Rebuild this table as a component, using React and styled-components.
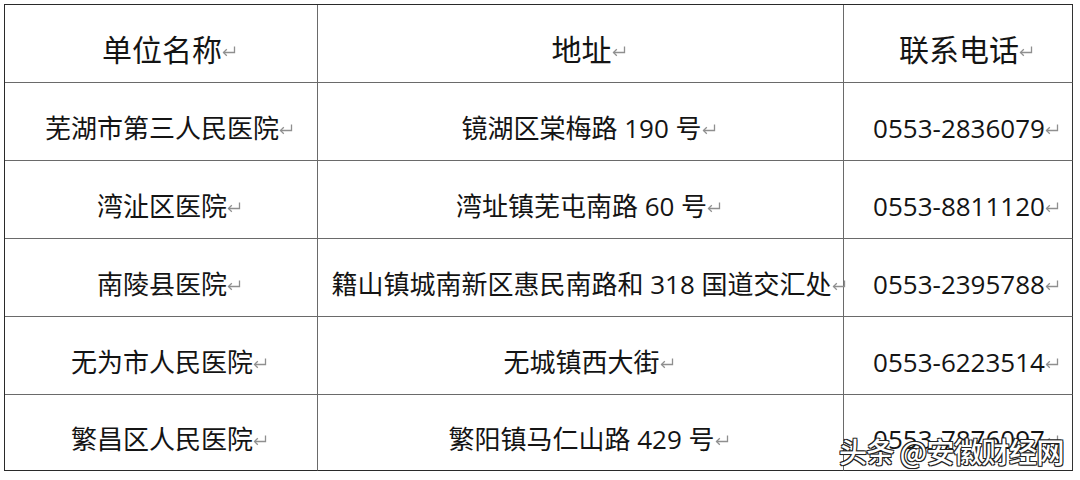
import styled, { createGlobalStyle } from "styled-components";

const GlobalStyle = createGlobalStyle`
  html, body {
    margin: 0;
    padding: 0;
    background: #ffffff;
  }
  body {
    font-family: "Open Sans", "Noto Sans CJK SC", sans-serif;
    color: #111;
  }
`;

const Wrap = styled.div`
  position: relative;
  width: 1069px;
  margin: 4px 0 0 4px;
`;

const Grid = styled.div`
  display: grid;
  grid-template-columns: 313px 526px 229px;
  grid-template-rows: repeat(5, 78px) 76px;
  border-top: 1px solid #2a2a2a;
  border-left: 1px solid #2a2a2a;
`;

const Cell = styled.div`
  display: flex;
  align-items: center;
  justify-content: center;
  padding: 12px 0 0 16px;
  border-right: 1px solid ${(p) => (p.$last ? "#333" : "#6a6a6a")};
  border-bottom: 1px solid ${(p) => (p.$bottom ? "#2a2a2a" : "#6a6a6a")};
  font-size: ${(p) => (p.$head ? "30px" : "26px")};
  white-space: nowrap;
  min-width: 0;
`;

const Text = styled.span`
  line-height: 1;
  color: #141414;
`;

const Mark = styled.svg`
  flex: none;
  width: 14px;
  height: 12px;
  margin-top: 2px;
  margin-left: 0;
`;

const Watermark = styled.div`
  position: absolute;
  right: 9px;
  bottom: 2px;
  font-family: "Noto Sans CJK SC", sans-serif;
  font-size: 28px;
  font-weight: 500;
  line-height: 1.3;
  color: #fff;
  text-shadow: -1px -1px 0 #222, 1px -1px 0 #222, -1px 1px 0 #222, 1px 1px 0 #222,
    0 1px 1px rgba(0, 0, 0, 0.6);
  letter-spacing: -0.5px;
  pointer-events: none;
`;

const ReturnMark = () => (
  <Mark viewBox="0 0 14 12">
    <path d="M12.5 1.5 V7.5 H1.5" fill="none" stroke="#8f8f8f" strokeWidth="1.3" />
    <path d="M4.8 4.3 L1.5 7.5 L4.8 10.7" fill="none" stroke="#8f8f8f" strokeWidth="1.3" />
  </Mark>
);

const header = ["单位名称", "地址", "联系电话"];

const rows = [
  ["芜湖市第三人民医院", "镜湖区棠梅路 190 号", "0553-2836079"],
  ["湾沚区医院", "湾址镇芜屯南路 60 号", "0553-8811120"],
  ["南陵县医院", "籍山镇城南新区惠民南路和 318 国道交汇处", "0553-2395788"],
  ["无为市人民医院", "无城镇西大街", "0553-6223514"],
  ["繁昌区人民医院", "繁阳镇马仁山路 429 号", "0553-7876097"],
];

export default function App() {
  return (
    <>
      <GlobalStyle />
      <Wrap>
        <Grid>
          {header.map((h, i) => (
            <Cell key={h} $head $last={i === 2}>
              <Text>{h}</Text>
              <ReturnMark />
            </Cell>
          ))}
          {rows.map((r, ri) =>
            r.map((c, ci) => (
              <Cell key={`${ri}-${ci}`} $last={ci === 2} $bottom={ri === rows.length - 1}>
                <Text>{c}</Text>
                <ReturnMark />
              </Cell>
            ))
          )}
        </Grid>
        <Watermark>头条 @安徽财经网</Watermark>
      </Wrap>
    </>
  );
}
